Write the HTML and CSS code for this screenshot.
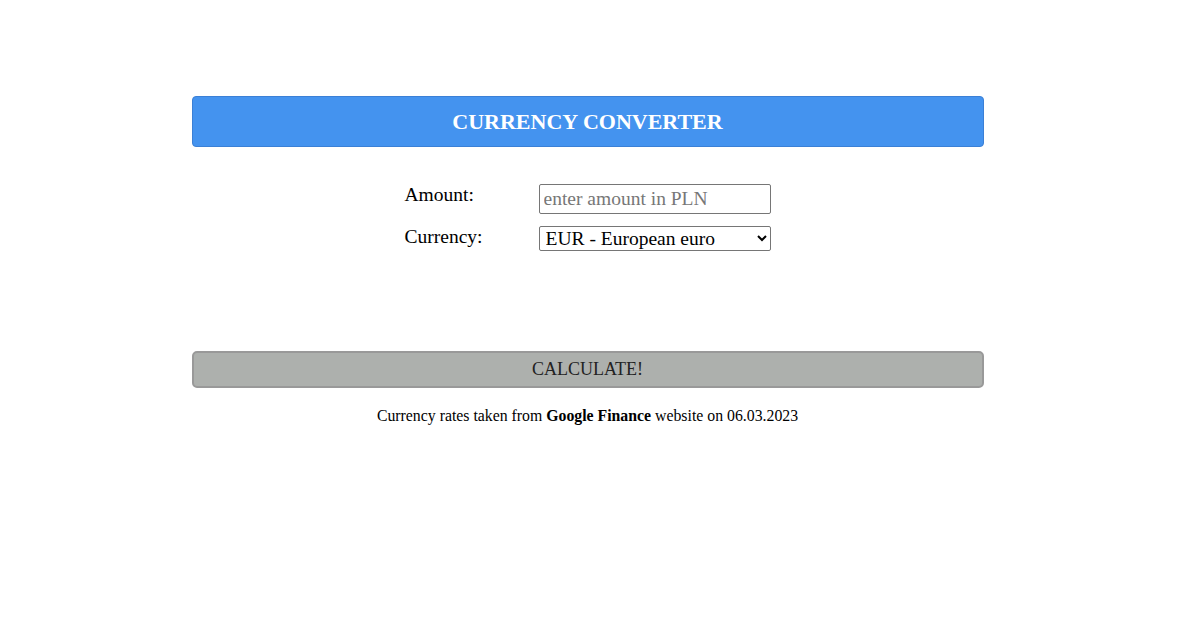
FILE: index.html
```html
<!DOCTYPE html>
<html>
<head>
<meta charset="utf-8">
<link rel="stylesheet" href="styles.css">
</head>
<body>
<div class="page">
  <div class="header">CURRENCY CONVERTER</div>
  <div class="form">
    <label class="label" for="amount">Amount:</label>
    <input class="input" id="amount" type="text" placeholder="enter amount in PLN">
    <label class="label" for="currency">Currency:</label>
    <select class="select" id="currency">
      <option>EUR - European euro</option>
    </select>
  </div>
  <button class="calc">CALCULATE!</button>
  <p class="note">Currency rates taken from <b>Google Finance</b> website on 06.03.2023</p>
</div>
</body>
</html>
```
FILE: styles.css
```css
html, body {
  margin: 0;
  padding: 0;
  background: #fff;
}
body {
  font-family: "Liberation Serif", "Times New Roman", serif;
  color: #000;
}
.page {
  width: 1175px;
  display: flex;
  flex-direction: column;
  align-items: center;
  padding-top: 96px;
}
.header {
  width: 790px;
  height: 49px;
  box-sizing: content-box;
  border: 1px solid #3b80d6;
  border-radius: 4px;
  background: #4493ef;
  color: #fff;
  font-weight: bold;
  font-size: 22px;
  line-height: 49px;
  text-align: center;
}
.form {
  display: grid;
  grid-template-columns: 134px 232px;
  row-gap: 12px;
  margin-top: 37px;
  font-size: 19.5px;
  align-items: center;
}
.label {
  align-self: start;
  line-height: 22px;
}
.input {
  box-sizing: border-box;
  width: 232px;
  height: 30px;
  border: 1px solid #767676;
  border-radius: 2px;
  padding: 0 4px;
  font-family: "Liberation Serif", serif;
  font-size: 19.5px;
}
.input::placeholder {
  color: #777;
}
.select {
  box-sizing: border-box;
  width: 232px;
  height: 25px;
  border: 1px solid #767676;
  border-radius: 2px;
  font-family: "Liberation Serif", serif;
  font-size: 19.5px;
  background: #fff;
  color: #000;
  padding: 0 2px;
}
.calc {
  margin-top: 100px;
  width: 792px;
  height: 37px;
  background: #adb0ad;
  border: 2px solid #999;
  border-radius: 5px;
  color: #222;
  font-family: "Liberation Serif", serif;
  font-size: 18px;
}
.note {
  margin: 19px 0 0;
  font-size: 15.8px;
}
```
